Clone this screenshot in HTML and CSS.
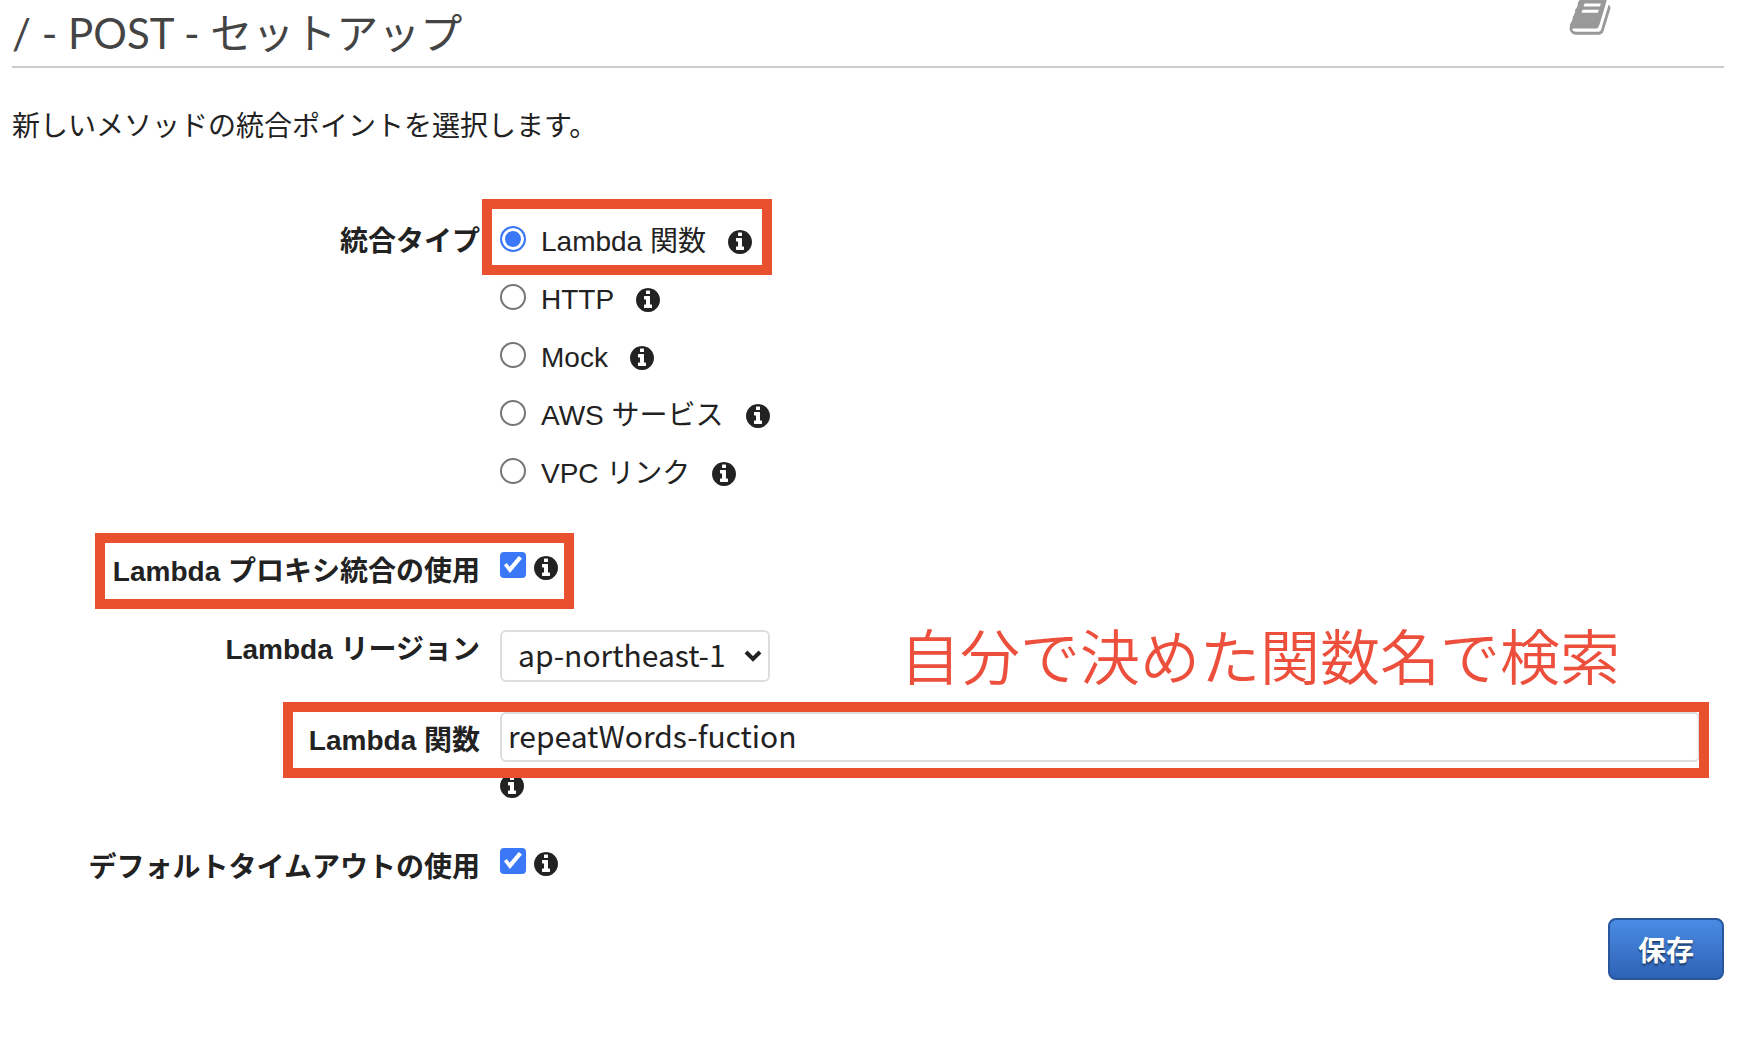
FILE: index.html
```html
<!DOCTYPE html>
<html lang="ja">
<head>
<meta charset="utf-8">
<meta name="viewport" content="width=device-width, initial-scale=1">
<title>/ - POST - セットアップ</title>
<link rel="stylesheet" href="styles.css">
</head>
<body>
<svg class="sprite" aria-hidden="true">
  <symbol id="info" viewBox="0 128 1536 1536"><path d="M1024 1376v-160q0-14-9-23t-23-9h-96v-512q0-14-9-23t-23-9h-320q-14 0-23 9t-9 23v160q0 14 9 23t23 9h96v320h-96q-14 0-23 9t-9 23v160q0 14 9 23t23 9h448q14 0 23-9t9-23zm-128-896v-160q0-14-9-23t-23-9h-192q-14 0-23 9t-9 23v160q0 14 9 23t23 9h192q14 0 23-9t9-23zm640 416q0 209-103 385.5t-279.5 279.5-385.5 103-385.5-103-279.5-279.5-103-385.5 103-385.5 279.500-279.500 385.500-103 385.500 103 279.500 279.500 103 385.500z"/></symbol>
</svg>

<header class="header">
  <h1 class="title">/ - POST - セットアップ</h1>
  <svg class="book" viewBox="0 0 1792 1792" aria-hidden="true"><path d="M1703 478q40 57 18 129l-275 906q-19 64-76.500 107.500t-122.500 43.500h-923q-77 0-148.500-53.500t-99.500-131.500q-24-67-2-127 0-4 3-27t4-37q1-8-3-21.500t-3-19.500q2-11 8-21t16.500-23.500 16.500-23.500q23-38 45-91.500t30-91.500q3-10 .5-30t-.5-28q3-11 17-28t17-23q21-36 42-92t25-90q1-9-2.500-32t.5-28q4-13 22-30.500t22-22.500q19-26 42.500-84.500t27.500-96.500q1-8-3-25.500t-2-26.500q2-8 9-18t18-23 17-21q8-12 16.500-30.500t15-35 16-36 19.500-32 26.500-23.500 36-11.500 47.500 5.500l-1 3q38-9 51-9h761q74 0 114 56t18 130l-274 906q-36 119-71.500 153.500t-128.500 34.500h-869q-27 0-38 15-11 16-1 43 24 70 144 70h923q29 0 56-15.500t35-41.500l300-987q7-22 5-57 38 15 59 43zm-1064 2q-4 13 2 22.500t20 9.500h608q13 0 25.500-9.500t16.500-22.500l21-64q4-13-2-22.500t-20-9.500h-608q-13 0-25.500 9.500t-16.500 22.500zm-83 256q-4 13 2 22.500t20 9.500h608q13 0 25.500-9.500t16.500-22.500l21-64q4-13-2-22.500t-20-9.500h-608q-13 0-25.500 9.500t-16.500 22.500z"/></svg>
</header>

<main>
  <p class="intro">新しいメソッドの統合ポイントを選択します。</p>

  <form class="form">
    <div class="row types" role="radiogroup" aria-labelledby="type-label">
      <span class="label" id="type-label">統合タイプ</span>
      <div class="options">
        <div class="option">
          <input class="tick radio" type="radio" name="type" id="type-lambda" checked>
          <label for="type-lambda">Lambda 関数</label>
          <svg class="info" aria-hidden="true"><use href="#info"/></svg>
          <span class="mark mark-type"></span>
        </div>
        <div class="option">
          <input class="tick radio" type="radio" name="type" id="type-http">
          <label for="type-http">HTTP</label>
          <svg class="info" aria-hidden="true"><use href="#info"/></svg>
        </div>
        <div class="option">
          <input class="tick radio" type="radio" name="type" id="type-mock">
          <label for="type-mock">Mock</label>
          <svg class="info" aria-hidden="true"><use href="#info"/></svg>
        </div>
        <div class="option">
          <input class="tick radio" type="radio" name="type" id="type-aws">
          <label for="type-aws">AWS サービス</label>
          <svg class="info" aria-hidden="true"><use href="#info"/></svg>
        </div>
        <div class="option">
          <input class="tick radio" type="radio" name="type" id="type-vpc">
          <label for="type-vpc">VPC リンク</label>
          <svg class="info" aria-hidden="true"><use href="#info"/></svg>
        </div>
      </div>
    </div>

    <div class="row proxy">
      <label class="label" for="proxy">Lambda プロキシ統合の使用</label>
      <div class="check">
        <input class="tick box" type="checkbox" id="proxy" checked>
        <svg class="info" aria-hidden="true"><use href="#info"/></svg>
      </div>
      <span class="mark mark-proxy"></span>
    </div>

    <div class="row region">
      <label class="label" for="region">Lambda リージョン</label>
      <div class="region-field">
        <div class="select-box">
          <select class="select" id="region"><option>ap-northeast-1</option></select>
          <svg class="chevron" viewBox="0 0 18 12" aria-hidden="true"><path d="M2 2l7 7 7-7"/></svg>
        </div>
        <span class="note">自分で決めた関数名で検索</span>
      </div>
    </div>

    <div class="row function">
      <label class="label" for="function">Lambda 関数</label>
      <div class="function-field">
        <input class="text" type="text" id="function" value="repeatWords-fuction">
        <svg class="info" aria-hidden="true"><use href="#info"/></svg>
      </div>
      <span class="mark mark-function"></span>
    </div>

    <div class="row timeout">
      <label class="label" for="timeout">デフォルトタイムアウトの使用</label>
      <div class="check">
        <input class="tick box" type="checkbox" id="timeout" checked>
        <svg class="info" aria-hidden="true"><use href="#info"/></svg>
      </div>
    </div>

    <div class="actions"><button class="save" type="button">保存</button></div>
  </form>
</main>
</body>
</html>
```
FILE: styles.css
```css
* { box-sizing: border-box; }

body {
  margin: 0;
  padding: 0 14px 0 12px;
  background: #fff;
  color: #222;
  font: 28px/58px "Liberation Sans", "Noto Sans CJK JP", sans-serif;
}

.sprite { display: none; }

.header {
  display: flex;
  justify-content: space-between;
  align-items: flex-start;
  border-bottom: 2px solid #ccc;
}

.title {
  margin: 0;
  color: #444;
  font: 400 42px/66px "Lato", "Noto Sans CJK JP", sans-serif;
}

.book {
  width: 44px;
  height: 44px;
  margin: -6px 112px 0 0;
  fill: #999;
}

.intro { margin: 30px 0 57px; }

.row {
  position: relative;
  display: grid;
  grid-template-columns: 468px minmax(0, 1fr);
  column-gap: 20px;
  align-items: start;
}

.label {
  font-weight: 700;
  text-align: right;
  white-space: nowrap;
}

.option {
  position: relative;
  display: flex;
  align-items: center;
  width: max-content;
}

.option label { margin: 0 22px 0 15px; }

.tick {
  position: relative;
  flex: none;
  width: 26px;
  height: 26px;
  margin: 0 0 6px;
  appearance: none;
}

.radio {
  border: 2px solid #767676;
  border-radius: 50%;
}

.radio:checked {
  border-color: #3b78f7;
  background: #3b78f7;
  box-shadow: inset 0 0 0 3px #fff;
}

.box {
  border: 2px solid #767676;
  border-radius: 4px;
}

.box:checked {
  border-color: #3b78f7;
  background: #3b78f7;
}

.box:checked::after {
  content: "";
  position: absolute;
  inset: 0;
  background: #fff;
  clip-path: polygon(9% 51%, 22% 41%, 35% 58%, 76% 9%, 91% 21%, 36% 86%);
}

.info {
  display: block;
  flex: none;
  width: 24px;
  height: 24px;
  fill: #222;
}

.check {
  display: flex;
  align-items: center;
  gap: 8px;
  height: 58px;
  padding-bottom: 8px;
}

/* Highlight frames drawn over the form */
.mark {
  position: absolute;
  border: 10px solid #e9502e;
  pointer-events: none;
}

.mark-type { top: -14px; bottom: -4px; left: -18px; width: 290px; }
.mark-proxy { top: -10px; bottom: -8px; left: 83px; width: 479px; }
.mark-function { top: -10px; left: 271px; right: 15px; height: 76px; }

.proxy { margin-top: 40px; }
.region { margin-top: 20px; }
.function { margin-top: 30px; }
.timeout { margin-top: 41px; }

.region-field {
  display: flex;
  align-items: flex-start;
  gap: 130px;
  height: 61px;
  padding-top: 9px;
}

.select-box { position: relative; width: 270px; }

.select,
.text {
  display: block;
  width: 100%;
  border: 2px solid #ddd;
  border-radius: 6px;
  background: #fff;
  color: #222;
  font: 30px "Noto Sans CJK JP", sans-serif;
}

.select {
  height: 52px;
  padding: 0 0 4px 16px;
  appearance: none;
}

.chevron {
  position: absolute;
  top: 20px;
  right: 8px;
  width: 18px;
  height: 12px;
  fill: none;
  stroke: #222;
  stroke-width: 4;
  pointer-events: none;
}

.note {
  color: #ed4f3d;
  font-size: 60px;
  font-weight: 350;
  line-height: 60px;
  white-space: nowrap;
}

.function-field { padding-right: 24px; }

.text {
  height: 50px;
  margin-bottom: 12px;
  padding: 0 6px 4px;
}

.actions {
  display: flex;
  justify-content: flex-end;
  margin-top: 21px;
}

.save {
  width: 116px;
  height: 62px;
  padding: 0;
  border: 2px solid #28559c;
  border-radius: 8px;
  background: linear-gradient(#4a8be4, #2e63b5);
  color: #fff;
  font: 700 28px "Noto Sans CJK JP", sans-serif;
  text-shadow: 0 2px 2px rgba(0, 0, 0, 0.5);
}
```
